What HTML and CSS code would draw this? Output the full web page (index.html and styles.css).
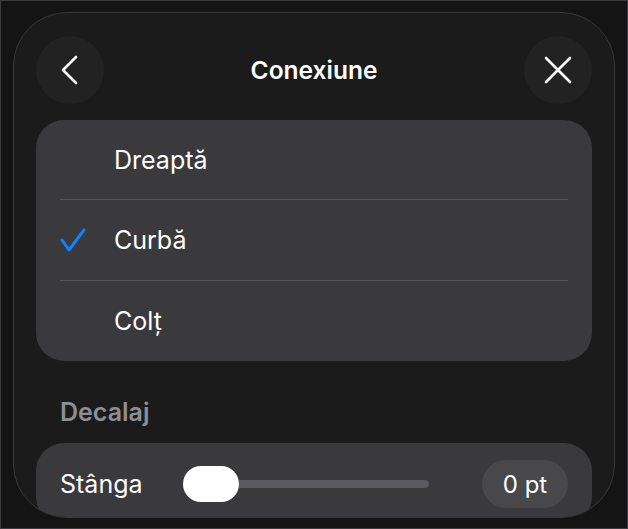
FILE: index.html
```html
<!DOCTYPE html>
<html lang="ro">
<head>
  <meta charset="UTF-8" />
  <meta name="viewport" content="width=device-width, initial-scale=1.0">
  <title>Conexiune</title>
  <link rel="stylesheet" href="styles.css">
</head>
<body>
  <div class="screen">
    <div class="sheet">
      <!-- Antet -->
      <div class="header">
        <div class="round-btn">
          <svg width="20" height="30" viewBox="0 0 20 30"><path d="M16 2 L3 15 L16 28" fill="none" stroke="#fff" stroke-width="2.6" stroke-linecap="round" stroke-linejoin="round"/></svg>
        </div>
        <div class="title">Conexiune</div>
        <div class="round-btn">
          <svg width="30" height="30" viewBox="0 0 30 30"><path d="M3 3 L27 27 M27 3 L3 27" fill="none" stroke="#fff" stroke-width="2.6" stroke-linecap="round"/></svg>
        </div>
      </div>

      <!-- Lista de tipuri -->
      <div class="card">
        <div class="row">
          <span class="check"></span>
          <span class="label">Dreaptă</span>
        </div>
        <div class="row">
          <span class="check">
            <svg width="26" height="24" viewBox="0 0 26 24"><path d="M2 12 L9 22 L24 2" fill="none" stroke="#0a84ff" stroke-width="3" stroke-linecap="round" stroke-linejoin="round"/></svg>
          </span>
          <span class="label">Curbă</span>
        </div>
        <div class="row">
          <span class="check"></span>
          <span class="label">Colț</span>
        </div>
      </div>

      <div class="section-title">Decalaj</div>

      <div class="card">
        <div class="slider-row">
          <span class="slider-label">Stânga</span>
          <div class="slider">
            <div class="thumb"></div>
            <div class="track"></div>
          </div>
          <span class="value">0 pt</span>
        </div>
      </div>
    </div>
  </div>
</body>
</html>
```

FILE: styles.css
```css
* {
  box-sizing: border-box;
}
body {
  margin: 0;
  background-color: #141414;
  color: #fff;
  font-family: Inter, "Noto Sans", sans-serif;
}
.screen {
  width: 628px;
  height: 529px;
  border: 1px solid #3c3c3e;
  padding: 11px 12px 10px 12px;
}
/* Panou */
.sheet {
  height: 506px;
  background-color: #1b1b1b;
  border: 1px solid #38383a;
  border-radius: 54px;
  overflow: hidden;
  padding: 23px 22px 0 22px;
}
.header {
  display: flex;
  align-items: center;
  justify-content: space-between;
  height: 68px;
}
.round-btn {
  width: 68px;
  height: 68px;
  border-radius: 50%;
  background-color: #222222;
  display: flex;
  align-items: center;
  justify-content: center;
}
.title {
  font-size: 24.5px;
  font-weight: 600;
}
.card {
  background-color: #3a3a3c;
  border-radius: 28px;
  margin-top: 16px;
}
.row {
  display: flex;
  align-items: center;
  height: 81px;
  margin: 0 24px;
  border-top: 1px solid #555558;
}
.row:first-child {
  border-top: none;
  height: 79px;
}
.check {
  width: 54px;
  display: flex;
  align-items: center;
}
.label {
  font-size: 25px;
}
.section-title {
  margin: 37px 0 0 24px;
  font-size: 25px;
  font-weight: 600;
  color: #8e8e93;
  line-height: 28px;
}
.card + .section-title + .card {
  margin-top: 17px;
}
.slider-row {
  display: flex;
  align-items: center;
  height: 82px;
  padding: 0 24px;
}
.slider-label {
  font-size: 25px;
  width: 123px;
}
.slider {
  display: flex;
  align-items: center;
  width: 246px;
}
.thumb {
  width: 56px;
  height: 36px;
  border-radius: 18px;
  background-color: #fff;
}
.track {
  flex: 1;
  height: 8px;
  background-color: #5a5a5e;
  border-radius: 0 4px 4px 0;
}
.value {
  margin-left: auto;
  background-color: #48484a;
  border-radius: 24px;
  height: 48px;
  width: 86px;
  display: flex;
  align-items: center;
  justify-content: center;
  font-size: 24px;
}
```
